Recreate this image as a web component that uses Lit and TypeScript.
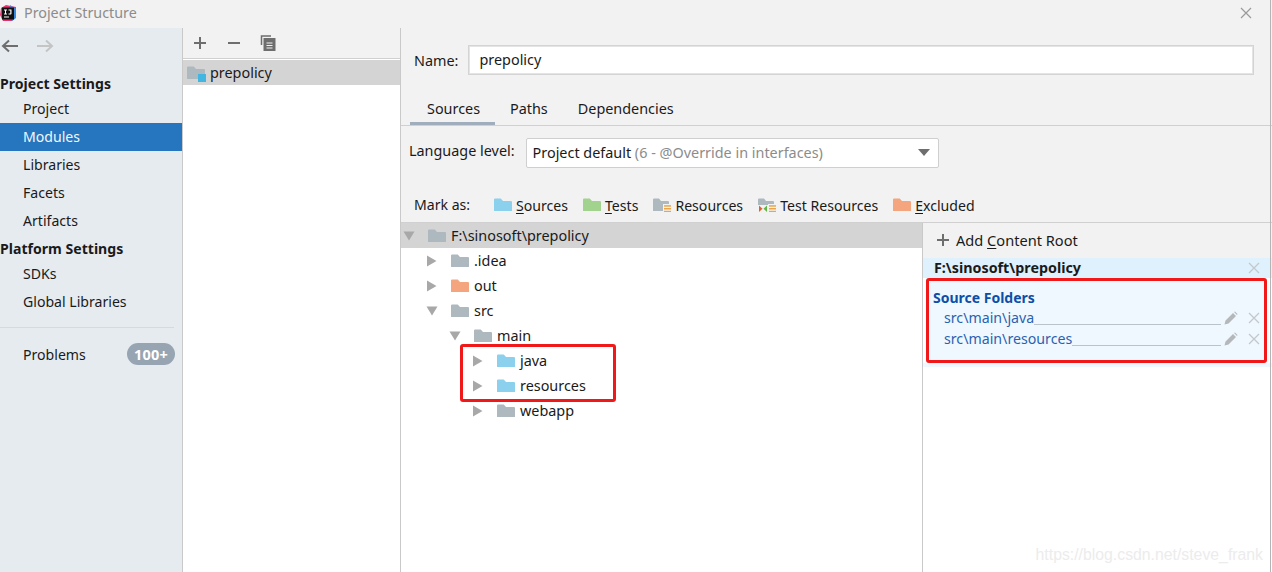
import { LitElement, html, css, svg } from "lit";
import { customElement } from "lit/decorators.js";

const folderPath = "M0 1.5 a1 1 0 0 1 1-1 h5 l2 2.5 h7 a1 1 0 0 1 1 1 V12.5 a.5 .5 0 0 1 -.5 .5 H.5 a.5 .5 0 0 1 -.5 -.5 z";
const folder = (c: string, extra: unknown = "", sx = 1.125) => html`<svg class="folder" width="18" height="14" viewBox="0 0 18 14"><path d=${folderPath} fill=${c} transform="scale(${sx} 1)"/>${extra}</svg>`;
const stripes = svg`<rect x="10" y="6" width="9" height="9" fill="#f2f2f2"/><g fill="#e8a54a"><rect x="11" y="7.2" width="8" height="1.5"/><rect x="11" y="10" width="8" height="1.5"/><rect x="11" y="12.8" width="8" height="1.5"/></g>`;
const BLUE = "#8bd0ec", GRAY = "#aeb8bf", GREEN = "#a1d28e", ORANGE = "#f4a57e";
const arrowR = html`<svg class="arrow" width="14" height="14" viewBox="0 0 14 14"><path d="M2 1.5 L11.5 7 L2 12.5z" fill="#a8a8a8"/></svg>`;
const arrowD = html`<svg class="arrow" width="14" height="14" viewBox="0 0 14 14"><path d="M1.5 2.5 H12.5 L7 11.5z" fill="#a8a8a8"/></svg>`;
const cross = html`<svg class="x" width="12" height="12" viewBox="0 0 12 12"><path d="M1 1 L11 11 M11 1 L1 11" stroke="#c3c8cc" stroke-width="1.3"/></svg>`;
const pencil = html`<svg class="pen" width="14" height="14" viewBox="0 0 14 14"><path d="M0.5 13.5 L1.5 9.5 L9 2 L12 5 L4.5 12.5z M10 1 L11 0.5 L13.5 3 L13 4z" fill="#b4b8bb"/></svg>`;

@customElement("app-root")
export class AppRoot extends LitElement {
  static styles = css`
    :host { display: block; width: 1272px; height: 572px; overflow: hidden; position: relative; font-family: "Noto Sans", "Open Sans", sans-serif; font-size: 14.4px; color: #1a1a1a; background: #f2f2f2; }
    * { box-sizing: border-box; }
    .title { height: 28px; display: flex; align-items: center; background: #f2f2f2; color: #8c8c8c; font-size: 14.3px; padding-bottom: 3px; }
    .logo { width: 16px; height: 16px; margin-right: 8px; flex: none; }
    .close { margin-left: auto; margin-right: 20px; }
    .main { display: grid; grid-template-columns: 183px 218px 1fr; height: 544px; }
    .side { background: #e6ebf0; border-right: 1px solid #c9c9c9; display: flex; flex-direction: column; font-size: 14.1px; }
    .nav { height: 36px; display: flex; align-items: center; gap: 17px; padding-left: 1px; flex: none; }
    .group { font-weight: 700; height: 24px; line-height: 26px; margin-top: 7px; white-space: nowrap; }
    .group.second { margin-top: 1px; }
    .item { height: 28px; line-height: 28px; padding-left: 23px; }
    .item.sel { background: #2675bf; color: #f2f7fb; }
    .item.sdk { height: 27px; line-height: 27px; }
    .item.glob { height: 29px; line-height: 29px; }
    .rule { height: 1px; background: #d9d9d9; margin: 11px 8px 0 0; }
    .problems { display: flex; align-items: center; justify-content: space-between; padding: 0 7px 0 23px; height: 36px; margin-top: 8px; }
    .badge { background: #97a4b2; color: #fff; font-weight: 700; border-radius: 11px; height: 22px; width: 48px; display: flex; align-items: center; justify-content: center; font-size: 14.5px; letter-spacing: .2px; }
    .mods { border-right: 1px solid #c9c9c9; background: #fff; display: flex; flex-direction: column; }
    .modbar { height: 31px; background: #f2f2f2; display: flex; align-items: center; gap: 18px; padding: 0 0 1px 9px; border-bottom: 1px solid #d0d0d0; flex: none; }
    .modrow { margin-top: 1px; height: 25px; background: #d4d4d4; display: flex; align-items: center; gap: 5px; padding-left: 4px; }
    .modicon { position: relative; display: flex; }
    .badge-sq { position: absolute; right: -1px; bottom: -2px; width: 8px; height: 8px; background: #40b6e0; }
    .right { display: flex; flex-direction: column; min-width: 0; }
    .name { display: flex; align-items: center; height: 30px; margin: 17px 0 0 13px; gap: 10px; }
    .name .input { width: 786px; height: 30px; background: #fff; border: 1px solid #d4d4d4; box-shadow: 0 0 0 1px #e4e4e4 inset; display: flex; align-items: center; padding: 0 0 2px 10px; margin-right: 18px; }
    .tabs { display: flex; margin-top: 20px; height: 31px; border-bottom: 1px solid #d0d0d0; padding-left: 9px; flex: none; }
    .tab { height: 30px; padding: 0 15px; line-height: 27px; }
    .tab.on { border-bottom: 3px solid #a0adbd; width: 85px; padding: 0 0 0 17px; }
    .lang { display: flex; align-items: center; height: 30px; margin: 12px 0 0 8px; gap: 11px; }
    .lang .lbl { position: relative; top: -3px; }
    .combo { width: 413px; height: 30px; background: #fff; border: 1px solid #cfcfcf; border-radius: 2px; display: flex; align-items: center; padding: 0 8px 2px 6px; justify-content: space-between; }
    .combo i { font-style: normal; color: #8c8c8c; }
    .caret { width: 0; height: 0; border-left: 6px solid transparent; border-right: 6px solid transparent; border-top: 7px solid #6e6e6e; }
    .mark { display: flex; align-items: center; height: 30px; margin: 22px 0 0 13px; white-space: nowrap; font-size: 14.1px; }
    .mark .lbl { width: 80px; position: relative; top: -1px; }
    .m { display: flex; align-items: center; gap: 4px; margin-right: 15px; }
    u { text-underline-offset: 2px; }
    .split { display: grid; grid-template-columns: 522px 1fr; flex: 1; border-top: 1px solid #d0d0d0; margin-top: 2px; min-height: 0; }
    .tree { background: #fff; border-right: 1px solid #c9c9c9; position: relative; }
    .row { height: 25px; display: flex; align-items: center; gap: 5px; white-space: nowrap; }
    .row .arrow { margin-right: 7px; }
    .row.root { background: #d4d4d4; padding-left: 1px; }
    .hl { position: absolute; left: 59px; top: 121px; width: 156px; height: 58px; border: 3px solid #f01818; border-radius: 3px; }
    .roots { display: flex; flex-direction: column; background: #fff; }
    .add { height: 35px; background: #f2f2f2; display: flex; align-items: center; gap: 6px; padding: 0 0 2px 13px; flex: none; font-size: 14.6px; }
    .rh { height: 20px; background: #dff1fc; display: flex; align-items: center; font-weight: 700; padding: 0 12px 0 11px; justify-content: space-between; white-space: nowrap; line-height: 20px; flex: none; font-size: 14.3px; }
    .rb { margin: 0 5px 0 3px; height: 85px; border: 3px solid #f01818; border-radius: 3px; background: #f0f8ff; padding: 7px 0 0 4px; flex: none; }
    .sf { color: #0b4fa8; font-weight: 700; height: 19px; line-height: 20px; font-size: 14px; }
    .path { height: 21px; display: flex; align-items: center; color: #2a62b0; padding: 0 4px 0 11px; white-space: nowrap; font-size: 14.2px; }
    .path .fill { flex: 1; height: 1px; background: #b9c3cc; align-self: flex-end; margin: 0 3px 3px 0; }
    .path .x { margin-left: 10px; }
    .bgfill { background: #f0f8ff; height: 4px; flex: none; }
    .wm { position: absolute; right: 9px; bottom: 8px; color: #ececec; font-family: "Liberation Sans", sans-serif; font-size: 15.8px; }
    .edge { position: absolute; left: 1270px; top: 0; bottom: 0; width: 1px; background: #b4b4b4; }
  `;

  private treeRow(indent: number, arrow: unknown, color: string, label: string) {
    return html`<div class="row" style="padding-left:${indent}px">${arrow}${folder(color)}<span>${label}</span></div>`;
  }

  render() {
    return html`
      <div class="title">
        <svg class="logo" viewBox="0 0 16 16"><path d="M1 3 L6 0 L16 2 V12 L12 16 H3 L0 10z" fill="#e8336e"/><path d="M10 0 L16 4 V13 L12 16z" fill="#3a8be0"/><rect x="2" y="2.5" width="12" height="12" fill="#111"/><rect x="4" y="11.5" width="5" height="1" fill="#fff"/><path d="M4 4.5 h3 v1 h-1 v3 h1 v1 h-3 v-1 h1 v-3 h-1z M8.5 4.5 h3 v4 a1 1 0 0 1-1 1 h-2 v-1 h1.8 v-3 h-1.8z" fill="#fff"/></svg>
        <span>Project Structure</span>
        <svg class="close" width="12" height="12" viewBox="0 0 12 12"><path d="M1 1 L11 11 M11 1 L1 11" stroke="#9a9a9a" stroke-width="1.2"/></svg>
      </div>
      <div class="main">
        <div class="side">
          <div class="nav">
            <svg width="18" height="14" viewBox="0 0 18 14"><path d="M17 7 H3 M8 1.5 L2 7 L8 12.5" fill="none" stroke="#6e6e6e" stroke-width="2"/></svg>
            <svg width="18" height="14" viewBox="0 0 18 14"><path d="M1 7 H15 M10 1.5 L16 7 L10 12.5" fill="none" stroke="#c4c4c4" stroke-width="2"/></svg>
          </div>
          <div class="group">Project Settings</div>
          <div class="item">Project</div>
          <div class="item sel">Modules</div>
          <div class="item">Libraries</div>
          <div class="item">Facets</div>
          <div class="item">Artifacts</div>
          <div class="group second">Platform Settings</div>
          <div class="item sdk">SDKs</div>
          <div class="item glob">Global Libraries</div>
          <div class="rule"></div>
          <div class="problems"><span>Problems</span><span class="badge">100+</span></div>
        </div>
        <div class="mods">
          <div class="modbar">
            <svg width="16" height="16" viewBox="0 0 16 16"><path d="M8 2 V14 M2 8 H14" stroke="#6e6e6e" stroke-width="2"/></svg>
            <svg width="16" height="16" viewBox="0 0 16 16"><path d="M2 8 H14" stroke="#6e6e6e" stroke-width="2"/></svg>
            <svg width="16" height="16" viewBox="0 0 16 16"><path d="M1.5 10 V1 H11" fill="none" stroke="#6e6e6e" stroke-width="1.5"/><rect x="3.5" y="3" width="12" height="13" fill="#6e6e6e"/><path d="M6.5 8 h6 M6.5 10.5 h6 M6.5 13 h6" stroke="#f2f2f2" stroke-width="1.2"/></svg>
          </div>
          <div class="modrow"><span class="modicon">${folder(GRAY)}<span class="badge-sq"></span></span><span>prepolicy</span></div>
        </div>
        <div class="right">
          <div class="name"><span>Name:</span><div class="input">prepolicy</div></div>
          <div class="tabs">
            <div class="tab on">Sources</div><div class="tab">Paths</div><div class="tab">Dependencies</div>
          </div>
          <div class="lang"><span class="lbl">Language level:</span>
            <div class="combo"><span>Project default <i>(6 - @Override in interfaces)</i></span><span class="caret"></span></div>
          </div>
          <div class="mark"><span class="lbl">Mark as:</span>
            <span class="m">${folder(BLUE)}<span><u>S</u>ources</span></span>
            <span class="m">${folder(GREEN)}<span><u>T</u>ests</span></span>
            <span class="m">${folder(GRAY, stripes, 1)}<span>Resources</span></span>
            <span class="m">${folder(GRAY, svg`${stripes}<rect x="0" y="7" width="10" height="8" fill="#f2f2f2"/><path d="M4.5 10.8 L1 7.5 V14z" fill="#e0632c"/><path d="M5.5 10.8 L9 7.5 V14z" fill="#62b543"/>`, 1)}<span>Test Resources</span></span>
            <span class="m">${folder(ORANGE)}<span><u>E</u>xcluded</span></span>
          </div>
          <div class="split">
            <div class="tree">
              <div class="row root">${arrowD}${folder(GRAY)}<span>F:\\sinosoft\\prepolicy</span></div>
              ${this.treeRow(24, arrowR, GRAY, ".idea")}
              ${this.treeRow(24, arrowR, ORANGE, "out")}
              ${this.treeRow(24, arrowD, GRAY, "src")}
              ${this.treeRow(47, arrowD, GRAY, "main")}
              ${this.treeRow(70, arrowR, BLUE, "java")}
              ${this.treeRow(70, arrowR, BLUE, "resources")}
              ${this.treeRow(70, arrowR, GRAY, "webapp")}
              <div class="hl"></div>
            </div>
            <div class="roots">
              <div class="add">
                <svg width="14" height="14" viewBox="0 0 14 14"><path d="M7 1 V13 M1 7 H13" stroke="#6e6e6e" stroke-width="2"/></svg>
                <span>Add <u>C</u>ontent Root</span>
              </div>
              <div class="rh"><span>F:\\sinosoft\\prepolicy</span>${cross}</div>
              <div class="rb">
                <div class="sf">Source Folders</div>
                <div class="path"><span>src\\main\\java</span><span class="fill"></span>${pencil}${cross}</div>
                <div class="path"><span>src\\main\\resources</span><span class="fill"></span>${pencil}${cross}</div>
              </div>
              <div class="bgfill"></div>
            </div>
          </div>
        </div>
      </div>
      <div class="wm">https://blog.csdn.net/steve_frank</div>
      <div class="edge"></div>
    `;
  }
}
